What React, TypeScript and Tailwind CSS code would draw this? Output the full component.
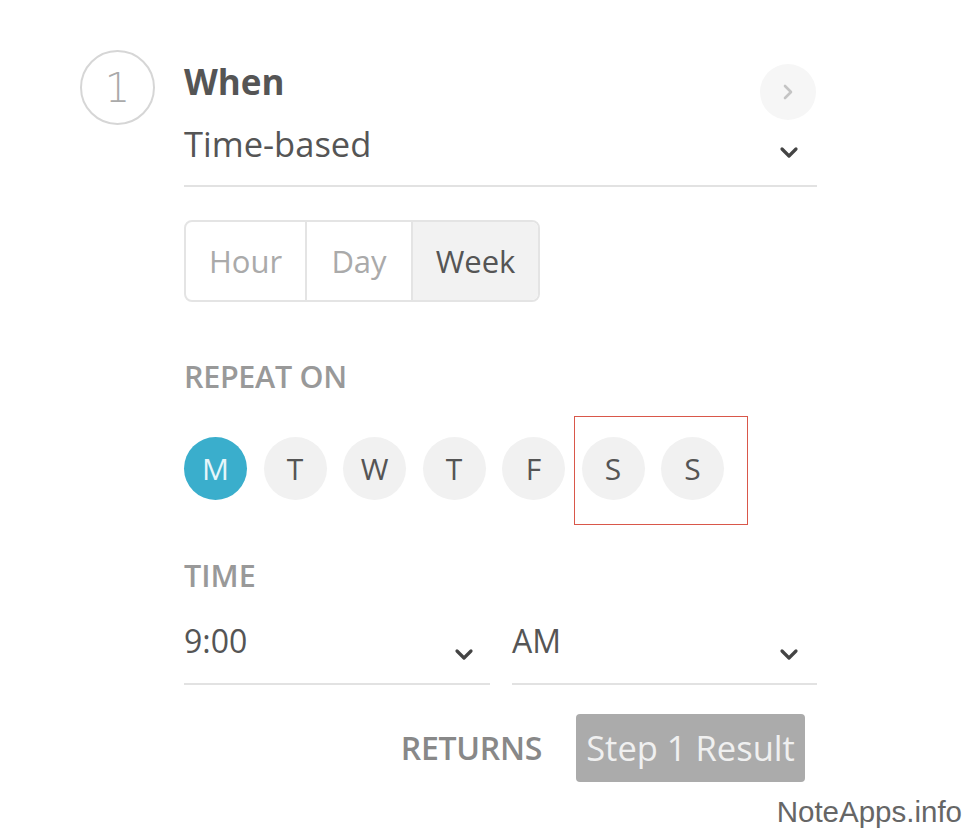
import React from "react";

function ChevronDown({ className = "" }: { className?: string }) {
  return (
    <svg width="20" height="14" viewBox="0 0 20 14" className={className}>
      <path d="M3 4 L10 11 L17 4" fill="none" stroke="#444" strokeWidth="3.2" strokeLinecap="round" strokeLinejoin="round" />
    </svg>
  );
}

export default function App() {
  const days = ["M", "T", "W", "T", "F", "S", "S"];
  return (
    <div className="relative w-[966px] h-[830px] bg-white overflow-hidden" style={{ fontFamily: "'Open Sans', 'Noto Sans', sans-serif" }}>
      <div className="flex pl-[80px] pt-[50px] gap-[29px]">
        <div
          className="w-[75px] h-[75px] rounded-full border-2 border-[#d6d6d6] flex items-center justify-center text-[40px] text-[#aaa] shrink-0 font-extralight leading-none"
          style={{ fontFamily: "'DejaVu Sans', sans-serif" }}
        >
          1
        </div>
        <div className="w-[633px] flex flex-col">
          <div className="flex items-start justify-between h-[62px]">
            <div className="text-[35px] font-bold text-[#555] leading-[40px] mt-[12px]">When</div>
            <div className="w-[56px] h-[56px] rounded-full bg-[#f6f6f6] flex items-center justify-center mt-[14px] mr-[1px]">
              <svg width="14" height="20" viewBox="0 0 14 20">
                <path d="M4 4 L10 10 L4 16" fill="none" stroke="#c4c4c4" strokeWidth="2.6" strokeLinecap="round" strokeLinejoin="round" />
              </svg>
            </div>
          </div>
          <div className="flex items-end justify-between h-[75px] border-b-2 border-[#e2e2e2] pb-[23px]">
            <div className="text-[34.5px] text-[#555] leading-[36px]">Time-based</div>
            <ChevronDown className="mr-[18px] mb-[3px]" />
          </div>
          <div className="mt-[33px] flex w-[356px] h-[82px] border-2 border-[#e4e4e4] rounded-[8px] overflow-hidden text-[31px]">
            <div className="w-[121px] flex items-center justify-center text-[#aaa] border-r-2 border-[#e4e4e4]">Hour</div>
            <div className="w-[106px] flex items-center justify-center text-[#aaa] border-r-2 border-[#e4e4e4]">Day</div>
            <div className="flex-1 flex items-center justify-center text-[#555] bg-[#f2f2f2]">Week</div>
          </div>
          <div className="mt-[58px] text-[30.5px] font-semibold text-[#999] leading-[32px] tracking-[-0.3px]">REPEAT ON</div>
          <div className="mt-[45px] flex gap-[16.5px]">
            {days.map((d, i) => (
              <div
                key={i}
                className={
                  i === 0
                    ? "w-[63px] h-[63px] rounded-full flex items-center justify-center text-[30px] bg-[#3aaecc] text-[#e6f6fa]"
                    : "w-[63px] h-[63px] rounded-full flex items-center justify-center text-[30px] bg-[#f1f1f1] text-[#555]"
                }
              >
                {d}
              </div>
            ))}
          </div>
          <div className="mt-[59px] text-[30.5px] font-semibold text-[#999] leading-[32px]">TIME</div>
          <div className="mt-[29px] flex gap-[22px]">
            <div className="w-[306px] flex items-end justify-between h-[65px] border-b-2 border-[#e2e2e2] pb-[24px]">
              <div className="text-[32px] text-[#555] leading-[36px]">9:00</div>
              <ChevronDown className="mr-[16px] -mb-[2px]" />
            </div>
            <div className="w-[305px] flex items-end justify-between h-[65px] border-b-2 border-[#e2e2e2] pb-[24px]">
              <div className="text-[32px] text-[#555] leading-[36px]">AM</div>
              <ChevronDown className="mr-[18px] -mb-[2px]" />
            </div>
          </div>
          <div className="mt-[29px] flex items-center justify-end gap-[34px] pr-[12px]">
            <div className="text-[32px] font-semibold text-[#888] tracking-[-0.3px]">RETURNS</div>
            <div className="w-[229px] h-[68px] rounded-[4px] bg-[#ababab] flex items-center justify-center text-[34.5px] text-[#f0f0f0] whitespace-nowrap">
              Step 1 Result
            </div>
          </div>
        </div>
      </div>
      <div className="absolute left-[574px] top-[416px] w-[174px] h-[109px] border-[1.5px] border-[#d9574a]" />
      <div className="absolute right-[4px] top-[790px] text-[29.5px] text-[#666]" style={{ fontFamily: "'Liberation Sans', Arial, sans-serif" }}>
        NoteApps.info
      </div>
    </div>
  );
}
